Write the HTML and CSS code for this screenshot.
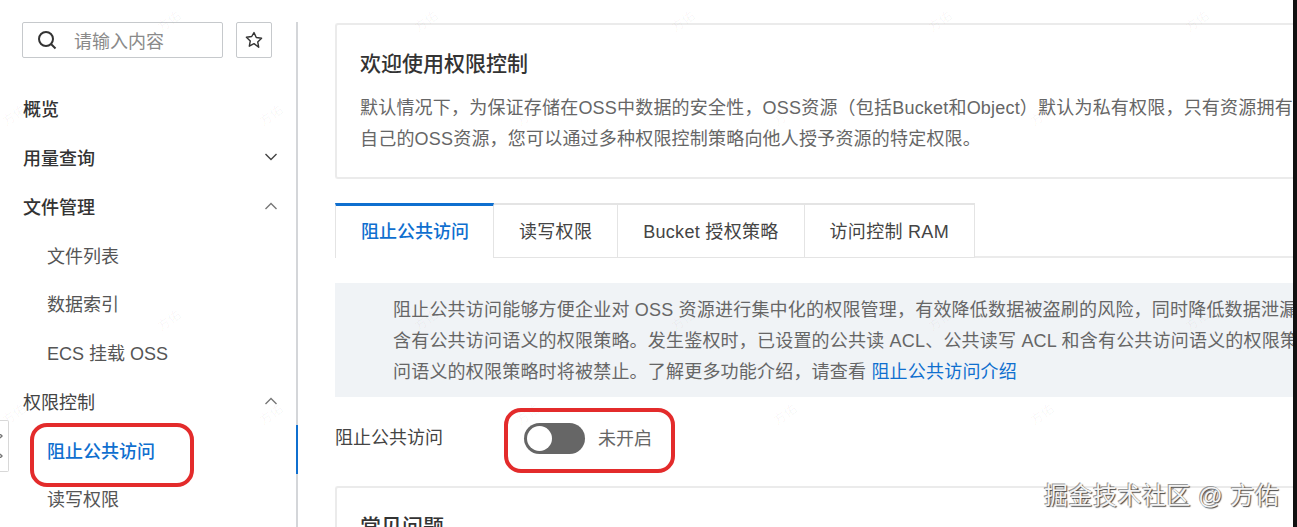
FILE: index.html
```html
<!DOCTYPE html>
<html lang="zh-CN">
<head>
  <meta charset="UTF-8">
  <meta name="viewport" content="width=device-width, initial-scale=1.0">
  <title>权限控制</title>
  <link rel="stylesheet" href="styles.css">
</head>
<body>
  <div class="page">
    <div class="shot">
      <aside class="sidebar">
        <div class="tools">
          <div class="search">
            <svg class="search-icon" width="20" height="20" viewBox="0 0 20 20" fill="none" stroke="#333" stroke-width="2">
              <circle cx="9" cy="9" r="7"/>
              <path d="M14 14l4.5 4.5"/>
            </svg>
            <span>请输入内容</span>
          </div>
          <div class="star">
            <svg width="18" height="18" viewBox="0 0 18 18" fill="none" stroke="#333" stroke-width="1.4" stroke-linejoin="round">
              <path d="M9 1.6l2.3 4.9 5.3.7-3.9 3.7 1 5.3L9 12.6l-4.7 2.6 1-5.3-3.9-3.7 5.3-.7z"/>
            </svg>
          </div>
        </div>
        <ul class="nav">
          <li class="nav-item strong">概览</li>
          <li class="nav-item strong">用量查询
            <svg class="chev" width="14" height="8" viewBox="0 0 14 8"><path d="M1.5 1L7 6.5 12.5 1"/></svg>
          </li>
          <li class="nav-item strong">文件管理
            <svg class="chev light" width="14" height="8" viewBox="0 0 14 8"><path d="M1.5 7L7 1.5 12.5 7"/></svg>
          </li>
          <li class="nav-item sub">文件列表</li>
          <li class="nav-item sub">数据索引</li>
          <li class="nav-item sub">ECS 挂载 OSS</li>
          <li class="nav-item">权限控制
            <svg class="chev light" width="14" height="8" viewBox="0 0 14 8"><path d="M1.5 7L7 1.5 12.5 7"/></svg>
          </li>
          <li class="nav-item sub active">阻止公共访问</li>
          <li class="nav-item sub">读写权限</li>
        </ul>
      </aside>

      <main class="content">
        <section class="card intro">
          <h2>欢迎使用权限控制</h2>
          <p>默认情况下，为保证存储在OSS中数据的安全性，OSS资源（包括Bucket和Object）默认为私有权限，只有资源拥有<br>自己的OSS资源，您可以通过多种权限控制策略向他人授予资源的特定权限。</p>
        </section>

        <div class="tabs">
          <div class="tab active">阻止公共访问</div>
          <div class="tab">读写权限</div>
          <div class="tab">Bucket 授权策略</div>
          <div class="tab">访问控制 RAM</div>
        </div>

        <div class="notice">
          阻止公共访问能够方便企业对 OSS 资源进行集中化的权限管理，有效降低数据被盗刷的风险，同时降低数据泄漏<br>
          含有公共访问语义的权限策略。发生鉴权时，已设置的公共读 ACL、公共读写 ACL 和含有公共访问语义的权限策<br>
          问语义的权限策略时将被禁止。了解更多功能介绍，请查看 <a href="#">阻止公共访问介绍</a>
        </div>

        <div class="setting">
          <span class="setting-label">阻止公共访问</span>
          <span class="switch"><i></i></span>
          <span class="switch-text">未开启</span>
        </div>

        <section class="card faq">
          <h2>常见问题</h2>
        </section>
      </main>

      <div class="watermarks">
        <div class="wm-row wm-a"><span>方佑</span><span>方佑</span><span>方佑</span><span>方佑</span><span>方佑</span></div>
        <div class="wm-row"><span>方佑</span><span>方佑</span><span>方佑</span><span>方佑</span><span>方佑</span></div>
        <div class="wm-row wm-a"><span>方佑</span><span>方佑</span><span>方佑</span><span>方佑</span><span>方佑</span></div>
        <div class="wm-row"><span>方佑</span><span>方佑</span><span>方佑</span><span>方佑</span><span>方佑</span></div>
      </div>

      <div class="collapse-btn">
        <svg width="3" height="24" viewBox="0 0 3 24" fill="none" stroke="#777" stroke-width="1.4">
          <path d="M0 0l2 2-2 2M0 20l2 2-2 2"/>
        </svg>
      </div>
      <div class="mark mark-nav"></div>
      <div class="mark mark-switch"></div>
      <div class="footer-mark">掘金技术社区 @ 方佑</div>
    </div>
    <div class="edge"></div>
  </div>
</body>
</html>
```

FILE: styles.css
```css
*{
  margin: 0;
  padding: 0;
  box-sizing: border-box;
}

html, body{
  height: 100%;
  overflow: hidden;
}

body{
  font-family: "Liberation Sans", "Noto Sans CJK SC", sans-serif;
  font-size: 18px;
  color: #333;
  background: #fff;
}

.page{
  display: flex;
  height: 527px;
}

.shot{
  flex: 1;
  min-width: 0;
  display: flex;
  position: relative;
  overflow: hidden;
}

.edge{
  width: 4px;
  background: #111;
}

/* 左侧菜单 */
.sidebar{
  width: 298px;
  flex: none;
  margin-top: 22px;
  border-right: 2px solid #d4d6d9;
}

.tools{
  display: flex;
  gap: 13px;
  padding-left: 22px;
}

.search{
  width: 201px;
  height: 36px;
  display: flex;
  align-items: center;
  gap: 17px;
  padding-left: 14px;
  border: 1px solid #c6c9cc;
  border-radius: 2px;
  color: #8a8a8a;
}

.search-icon{
  flex: none;
}

.star{
  width: 36px;
  height: 36px;
  display: flex;
  align-items: center;
  justify-content: center;
  border: 1px solid #c6c9cc;
  border-radius: 2px;
}

.nav{
  list-style: none;
  margin-top: 26px;
}

.nav-item{
  height: 48.75px;
  display: flex;
  align-items: center;
  justify-content: space-between;
  padding: 0 18px 0 23px;
  color: #444;
}

.nav-item.strong{
  font-weight: 500;
  color: #333;
}

.nav-item.sub{
  padding-left: 47px;
  color: #555;
}

.nav-item.active{
  color: #0f6fcf;
  font-weight: 500;
  margin-right: -2px;
  border-right: 2px solid #0f6fcf;
}

.chev{
  fill: none;
  stroke: #444;
  stroke-width: 1.4;
}

.chev.light{
  stroke: #777;
}

/* 右侧内容 */
.content{
  flex: 1;
  min-width: 0;
  padding: 23px 0 0 37px;
  white-space: nowrap;
}

.card{
  border: 2px solid #ebebeb;
  border-right: 0;
  border-radius: 3px 0 0 3px;
}

.card h2{
  font-size: 21px;
  font-weight: 500;
  line-height: 30px;
  color: #333;
}

.intro{
  height: 156px;
  padding: 24px 0 0 23px;
}

.intro p{
  margin-top: 14px;
  line-height: 31px;
  letter-spacing: .2px;
  color: #666;
}

.tabs{
  display: flex;
  margin-top: 24px;
  height: 55px;
  border-bottom: 2px solid #ebebeb;
}

.tab{
  height: 55px;
  padding: 0 25px 3px;
  display: flex;
  align-items: center;
  background: #fff;
  color: #444;
  border: 1px solid #e4e4e4;
  border-left: 0;
  border-top-width: 2px;
  letter-spacing: .3px;
}

.tab.active{
  width: 159px;
  padding-bottom: 5px;
  color: #0f6fcf;
  font-weight: 500;
  letter-spacing: 0;
  border-top: 3px solid #0f6fcf;
  border-bottom: 0;
  border-left: 1px solid #e4e4e4;
}

.notice{
  margin-top: 25px;
  height: 114px;
  padding: 12px 0 0 58px;
  line-height: 31px;
  letter-spacing: .2px;
  background: #f0f3f6;
  color: #666;
  overflow: hidden;
}

.notice a{
  color: #0f6fcf;
  text-decoration: none;
}

.setting{
  display: flex;
  align-items: center;
  height: 80px;
}

.setting-label{
  width: 189px;
  margin-bottom: 2px;
  color: #444;
}

.switch{
  width: 61px;
  height: 31px;
  padding: 3px;
  border-radius: 16px;
  background: #666;
  margin-top: 2px;
}

.switch i{
  display: block;
  width: 25px;
  height: 25px;
  border-radius: 50%;
  background: #fff;
}

.switch-text{
  margin-left: 13px;
  color: #666;
}

.faq{
  margin-top: 9px;
  height: 120px;
  padding: 24px 0 0 23px;
}

/* 盖在截图上的标注 */
.watermarks{
  position: absolute;
  inset: 0;
  display: grid;
  grid-template-rows: 94px 205px 94px 1fr;
  padding-top: 8px;
  pointer-events: none;
}

.wm-row{
  display: flex;
  font-size: 13px;
  line-height: 20px;
  color: rgba(0, 0, 0, .04);
}

.wm-row span{
  flex: none;
  width: 257px;
  height: 20px;
  transform: rotate(-35deg);
  transform-origin: 20px 10px;
}

.wm-a{
  padding-left: 155px;
}

.collapse-btn{
  position: absolute;
  left: 0;
  top: 420px;
  width: 9px;
  height: 52px;
  display: flex;
  align-items: center;
  border: 1px solid #d8d8d8;
  border-left: 0;
  border-radius: 0 2px 2px 0;
  background: #fff;
}

.mark{
  position: absolute;
  border: 4px solid #e32b2b;
  border-radius: 17px;
}

.mark-nav{
  left: 30px;
  top: 423px;
  width: 164px;
  height: 64px;
}

.mark-switch{
  left: 504px;
  top: 408px;
  width: 171px;
  height: 65px;
}

.footer-mark{
  position: absolute;
  left: 1044px;
  top: 481px;
  font-size: 24px;
  line-height: 30px;
  letter-spacing: .5px;
  white-space: nowrap;
  color: #f4f4f4;
  text-shadow: 1px 1px 1px #444, -1px -1px 0 #999;
}
```
